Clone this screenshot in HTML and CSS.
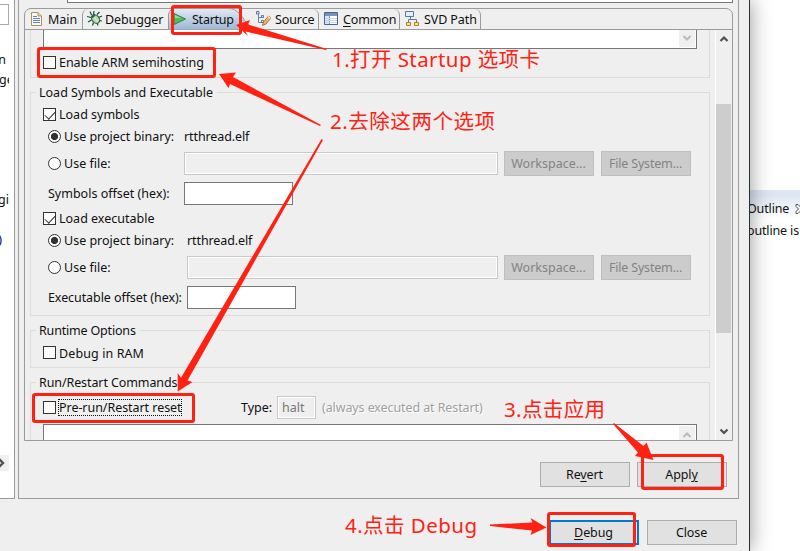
FILE: index.html
```html
<!DOCTYPE html>
<html lang="en">
<head>
<meta charset="utf-8">
<title>Debug Configurations</title>
<link rel="stylesheet" href="styles.css">
</head>
<body>
<div class="screen">
  <main class="dialog">
    <div class="upper">
      <aside class="tree">
        <div class="filter"></div>
        <div class="item i1">n</div>
        <div class="item i2">ge</div>
        <div class="item i3">gi</div>
        <div class="item i4">)</div>
        <div class="hscroll"><svg width="9" height="16"><path d="M-1 4l4 4-4 4" fill="none" stroke="#555" stroke-width="2.4"/></svg></div>
      </aside>
      <section class="config">
        <div class="name"></div>
        <div class="folder">
          <nav class="tabs">
            <div class="tab main"><svg width="14" height="16" viewBox="0 0 14 16"><path d="M1.500 1.500h6.500l3.500 3.500v9.500h-10z" fill="#f4f8fe" stroke="#b2914d"/><path d="M8 1.500v3.500h3.500" fill="#e8d7a0" stroke="#b2914d"/><path d="M3 5.500h4M3 7.500h7M3 9.500h7M3 11.500h7" stroke="#6187b7"/></svg><span>Main</span></div>
            <div class="tab debugger"><svg width="16" height="16" viewBox="0 0 16 16"><path d="M4.500 4L3 .500M6.500 3.500L7 0M10 3.500L12.500 1M4 6.500L0 5.500M4.500 9L1 11M6.500 11.500L5.500 14.500M11.500 6.500L15 5M12 9.500l3 .5M10 12l1 2.500" stroke="#174c48" stroke-width="1.200" fill="none"/><ellipse cx="8.500" cy="8" rx="3.600" ry="4.800" transform="rotate(-40 8.500 8)" fill="#b7d8a5" stroke="#2f6852" stroke-width="1.200"/><path d="M4 5.500L7 3l1.500 1.500-3 3z" fill="#2d6558"/><path d="M7 6l4 5" stroke="#f1f8cf"/></svg><span>Debugger</span></div>
            <div class="tab startup"><svg class="shape" width="92" height="22" viewBox="0 0 92 22"><defs><linearGradient id="sel" x1="0" y1="0" x2="0" y2="1"><stop offset="0" stop-color="#e4eaf2"/><stop offset="1" stop-color="#9bb5d5"/></linearGradient></defs><path d="M.5 22V6Q2 .5 7 .5H60C70 .5 74 9 78 14S87 21 92 21.500V22z" fill="url(#sel)" stroke="#9b9b9b"/></svg><svg class="play" width="14" height="16" viewBox="0 0 14 16"><path d="M1 2.500L12.500 8 1 13.500z" fill="#58b957" stroke="#278548"/><path d="M2 7V4l6 3z" fill="#9cdb91"/></svg><span>Startup</span></div>
            <div class="tab source"><svg width="16" height="16" viewBox="0 0 16 16"><path d="M2.500 3v8.500H6M2.500 6.500H6" stroke="#6686b2" fill="none"/><g fill="#dbe7fa" stroke="#5877a8"><path d="M.5.500h2.500v2.500H.5zM5.500 4.500h2v2h-2zM5.500 9.500h2v2h-2z"/></g><path d="M6.500 14.500l1-3.500 5-6 2.500 2-5 6z" fill="#f1b36c" stroke="#a77549"/><path d="M12 5.500l2.500 2" stroke="#eee" stroke-width="1.500"/></svg><span>Source</span></div>
            <div class="tab common"><svg width="15" height="16" viewBox="0 0 15 16"><path d="M.5 1.500h13v12H.5z" fill="#fff" stroke="#49648d"/><path d="M1 2h12v2H1z" fill="#7190bd"/><path d="M1 5h4v8H1z" fill="#d8e5f5"/><path d="M1 4.500h12M5.500 5v8" stroke="#7d95b8"/><path d="M1 7.500h12M1 9.500h12M1 11.500h12" stroke="#c5d4e7"/></svg><span><u>C</u>ommon</span></div>
            <div class="tab svd"><svg width="15" height="16" viewBox="0 0 15 16"><path d="M5.500 5.500v3M3.500 11.500V8.500h8v3" fill="none" stroke="#61799b"/><path d="M.5.500h8v5h-8z" fill="#e2edfc" stroke="#5877a8"/><path d="M1.500 11.500h4v3h-4zM9.500 11.500h4v3h-4z" fill="#fbe18a" stroke="#a88325"/></svg><span>SVD Path</span></div>
          </nav>
          <div class="viewport">
            <div class="groups">
              <section class="group semihost">
                <div class="area bottom"><i class="mini"><svg width="16" height="16"><path d="M4.500 6L8 9.500 11.500 6" fill="none" stroke="#bbb" stroke-width="2"/></svg></i></div>
                <div class="row"><i class="check"></i><span class="t-enable">Enable ARM semihosting</span></div>
              </section>
              <section class="group load">
                <h2>Load Symbols and Executable</h2>
                <div class="row r-first"><i class="check on"></i><span>Load symbols</span></div>
                <div class="row sub"><i class="radio on"></i><span class="lab">Use project binary:</span><span class="elf">rtthread.elf</span></div>
                <div class="row sub file"><i class="radio"></i><span class="lab">Use file:</span><i class="field off"></i><button disabled>Workspace...</button><button disabled>File System...</button></div>
                <div class="row sub offset"><span class="olab">Symbols offset (hex):</span><i class="field"></i></div>
                <div class="row r-second"><i class="check on"></i><span>Load executable</span></div>
                <div class="row sub wide"><i class="radio on"></i><span class="lab">Use project binary:</span><span class="elf">rtthread.elf</span></div>
                <div class="row sub file wide"><i class="radio"></i><span class="lab">Use file:</span><i class="field off"></i><button disabled>Workspace...</button><button disabled>File System...</button></div>
                <div class="row sub offset wide"><span class="olab">Executable offset (hex):</span><i class="field"></i></div>
              </section>
              <section class="group runtime">
                <h2 class="t-rt">Runtime Options</h2>
                <div class="row"><i class="check"></i><span class="low t-ram">Debug in RAM</span></div>
              </section>
              <section class="group run">
                <h2 class="t-run">Run/Restart Commands</h2>
                <div class="row"><i class="check"></i><span class="focus">Pre-run/Restart reset</span><span class="type">Type:</span><span class="halt">halt</span><span class="hint">(always executed at Restart)</span></div>
                <div class="area top"><i class="mini"><svg width="16" height="16"><path d="M4.500 11L8 7.500 11.500 11" fill="none" stroke="#bbb" stroke-width="2"/></svg></i></div>
              </section>
            </div>
            <div class="scroll">
              <svg width="16" height="17"><path d="M4.500 11L8 7.500 11.500 11" fill="none" stroke="#505050" stroke-width="2.200"/></svg>
              <div class="thumb"></div>
              <svg width="16" height="17"><path d="M4.500 6.500L8 10l3.500-3.500" fill="none" stroke="#505050" stroke-width="2.200"/></svg>
            </div>
          </div>
        </div>
        <div class="actions"><button>Re<u>v</u>ert</button><button>Appl<u>y</u></button></div>
      </section>
    </div>
    <footer class="actions foot"><button class="primary"><u>D</u>ebug</button><button>Close</button></footer>
  </main>
  <aside class="outline">
    <div class="head"><span>Outline</span><svg width="10" height="12"><path d="M1 1.500h2L5.500 4 8 1.500h2M1 1.500v2L3.500 6 1 8.500v2h2L5.500 8 8 10.500h2" fill="none" stroke="#555"/></svg></div>
    <div class="body">outline is</div>
  </aside>
  <svg class="notes" width="800" height="551" viewBox="0 0 800 551">
    <g fill="none" stroke="#ff2213" stroke-width="3">
      <rect x="172.500" y="6.500" width="68" height="27" rx="1.500"/>
      <rect x="38.500" y="48.500" width="176" height="28" rx="1.500"/>
      <rect x="33.500" y="394.500" width="160" height="27" rx="1.500"/>
      <rect x="642.500" y="455.500" width="80" height="33" rx="1.500"/>
      <rect x="548.500" y="513.500" width="86" height="32" rx="1.500"/>
    </g>
    <g fill="#ff2213">
      <path d="M236 25L250 20 248 24.500 327 49 326 50 245.500 31.500 248 36z"/>
      <path d="M219 74L236 72.500 233 77 321 125 320 126 230 84 228.500 88z"/>
      <path d="M177.700 391.500V373L181 377.700 321.500 139 323 140 187.500 380.500 192.500 382z"/>
      <path d="M613 424L614 423 643.500 446 646.500 442.500 653.500 460 635 456 638 452.500z"/>
      <path d="M490 524.500L532.500 522.500 530.500 518 546.500 527.500 530.500 535 532 530.500 490 526z"/>
    </g>
    <g class="say">
      <text x="332" y="67" textLength="208">1.打开 Startup 选项卡</text>
      <text x="330" y="129" textLength="165">2.去除这两个选项</text>
      <text x="504" y="417" textLength="101">3.点击应用</text>
      <text x="345" y="533" textLength="132">4.点击 Debug</text>
    </g>
  </svg>
</div>
</body>
</html>
```
FILE: styles.css
```css
* { box-sizing: border-box; }
body { margin: 0; font: 12.5px/16px "Noto Sans", "Noto Sans CJK SC", sans-serif; color: #111; }
i { font-style: normal; display: block; flex: none; }
svg { display: block; flex: none; }
u { text-underline-offset: 2px; text-decoration-thickness: 1px; }
.screen { position: relative; width: 800px; height: 551px; overflow: hidden; display: flex; background: #fff; }
.dialog { width: 750px; flex: none; background: #efefef; border-right: 1px solid #263035; box-shadow: 0 0 20px rgba(0,0,0,.42); z-index: 1; }
.upper { display: flex; gap: 3px; height: 499px; }

.tree { width: 15px; background: #fff; border: solid #9b9b9b; border-width: 0 1px 1px 0; padding-top: 4px; }
.filter { width: 9px; height: 21px; border: 1px solid #aaa; border-left: 0; }
.item { display: flex; justify-content: flex-end; width: 9px; height: 20px; overflow: hidden; }
.i1 { margin-top: 27px; width: 6px; }
.i2 { justify-content: flex-start; margin-left: -1px; width: 10px; }
.i3 { margin-top: 100px; }
.i4 { margin-top: 20px; width: 2px; color: #000090; }
.hscroll { width: 9px; height: 16px; margin-top: 203px; background: #f0f0f0; }

.config { width: 721px; border: solid #9b9b9b; border-width: 0 1px 1px; padding-left: 5px; }
.name { height: 3px; width: 666px; margin-left: 43px; border: solid #777; border-width: 0 1px 1px; background: #fff; }
.folder { margin-top: 5px; width: 709px; height: 433px; border: 1px solid #9b9b9b; border-radius: 7px 7px 0 0; overflow: hidden; }
.tabs { display: flex; height: 21px; border-bottom: 1px solid #9b9b9b; }
.tab { position: relative; display: flex; align-items: center; height: 20px; border-right: 1px solid #9b9b9b; border-radius: 0 6px 0 0; white-space: nowrap; }
.tab span { position: relative; padding-top: 2px; }
.main { width: 57px; padding-left: 5px; gap: 4px; border: 0; }
.debugger { width: 86px; padding-left: 4px; gap: 3px; border: 0; border-left: 1px solid #9b9b9b; border-radius: 6px 0 0; }
.debugger span { letter-spacing: -.1px; margin-left: -1px; }
.startup { width: 86px; padding-left: 5px; gap: 5px; border: 0; z-index: 1; }
.startup span { letter-spacing: -.25px; }
.startup .shape { position: absolute; left: 0; top: -1px; }
.play { position: relative; }
.source { width: 65px; padding-left: 2px; gap: 3px; }
.source span { letter-spacing: -.1px; }
.common { width: 81px; padding-left: 5px; gap: 4px; }
.common span { letter-spacing: -.15px; }
.svd { width: 81px; padding-left: 5px; gap: 4px; }
.svd span { letter-spacing: -.1px; }

.viewport { display: flex; height: 410px; overflow: hidden; }
.groups { width: 690px; padding-left: 5px; }
.group { width: 680px; border: 1px solid #dcdcdc; padding-left: 12px; }
.group h2 { margin: -8px 0 0 -7px; padding: 0 4px 0 3px; width: max-content; height: 16px; background: #efefef; font: inherit; }
.row { display: flex; align-items: center; height: 22px; gap: 3px; white-space: nowrap; }
.semihost { height: 48px; border-top: 0; }
.semihost .row { margin-top: 3px; }
.load { height: 224px; margin-top: 14px; }
.runtime { height: 38px; margin-top: 14px; }
.run { height: 100px; margin-top: 14px; }
.area { width: 654px; background: #fff; border: 1px solid #777; display: flex; justify-content: flex-end; padding-right: 1px; }
.bottom { height: 19px; border-top: 0; }
.top { height: 60px; margin-top: 5px; padding-top: 1px; }
.mini { width: 16px; height: 17px; background: #f0f0f0; }
.check { width: 13px; height: 13px; margin-bottom: 1px; background: #fff; border: 1px solid #333; }
.check.on::after { content: ""; display: block; width: 9px; height: 5px; margin: 2px 0 0 1px; border: solid #333; border-width: 0 0 1.3px 1.3px; transform: rotate(-47deg); }
.radio { width: 13px; height: 13px; margin-bottom: 1px; border: 1px solid #333; border-radius: 50%; background: #fff; }
.radio.on { background: radial-gradient(circle, #333 0 3.3px, #fff 3.9px); }
.sub { padding-left: 5px; }
.r-first { margin-top: 3px; }
.lab { width: 117px; }
.wide .lab { width: 120px; }
.elf { letter-spacing: -.1px; }
.t-enable { letter-spacing: -.03px; }
.t-rt { letter-spacing: -.18px; }
.t-run { letter-spacing: -.1px; }
.t-ram { letter-spacing: .1px; }
.low { padding-top: 1px; }
.file { height: 25px; margin-top: 3px; }
.field { height: 23px; border: 1px solid #777; background: #fff; }
.off { width: 314px; margin-right: 3px; background: #efefef; border-color: #c8c8c8; box-shadow: inset 0 0 0 1px #fff; }
.wide .off { width: 311px; }
.offset { height: 23px; margin-top: 6px; }
.offset .field { width: 109px; }
.olab { width: 133px; }
.wide .olab { width: 136px; letter-spacing: -.08px; }
.r-second { margin-top: 3px; }
button { width: 90px; height: 25px; padding: 0; background: #e1e1e1; border: 1px solid #adadad; font: inherit; color: #111; }
button:disabled { background: #ccc; border-color: #bfbfbf; color: #838383; }
.file button { padding-right: 1px; }
.file button + button { margin-left: 4px; letter-spacing: -.18px; }
.runtime .row { margin-top: 3px; }
.run .row { height: 23px; margin-top: 5px; }
.focus { width: 124px; height: 17px; margin-left: -1px; padding: 1px 0 0 1px; outline: 1px dotted #111; outline-offset: -1px; letter-spacing: -.05px; }
.type { margin-left: 56px; width: 33px; }
.halt { width: 39px; height: 23px; padding: 3px 4px; border: 1px solid #c8c8c8; box-shadow: inset 0 0 0 1px #fff; color: #777; }
.hint { margin-left: 3px; color: #a0a0a0; text-shadow: 1px 1px #fff; letter-spacing: -.1px; }
.scroll { width: 17px; border-left: 1px solid #fff; display: flex; flex-direction: column; }
.thumb { width: 15px; height: 229px; margin: 57px 0 90px; background: #cdcdcd; }

.actions { display: flex; justify-content: flex-end; gap: 7px; padding: 21px 11px 0 0; }
.actions button { letter-spacing: -.1px; padding-right: 1px; }
.foot { padding: 21px 12px 0 0; gap: 8px; }
.actions .primary { border: 2px solid #0078d7; }

.outline { flex: 1; padding-top: 190px; }
.head { height: 29px; border-top: 4px solid #dfe5f7; background: linear-gradient(#dce5f1, #fff); display: flex; align-items: center; gap: 6px; padding: 4px 0 0; }
.head span, .body { margin-left: -3px; white-space: nowrap; letter-spacing: -.15px; }
.body { padding-top: 4px; }
.notes { position: absolute; inset: 0; z-index: 2; }
.say { fill: #ff2213; font: 20.5px "Noto Sans", "Noto Sans CJK SC", sans-serif; }
```
